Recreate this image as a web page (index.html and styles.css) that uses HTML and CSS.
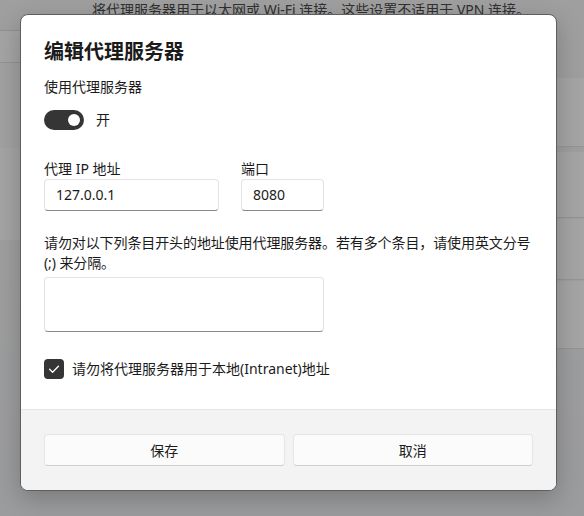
FILE: index.html
```html
<!DOCTYPE html>
<html lang="zh-CN">
<head>
<meta charset="utf-8">
<title>编辑代理服务器</title>
<link rel="stylesheet" href="styles.css">
</head>
<body>
<div class="screen">
  <div class="page">
    <div class="side">
      <div class="side-gap side-gap-top"></div>
      <div class="side-band side-band-a"></div>
      <div class="side-gap side-gap-mid"></div>
      <div class="side-band side-band-b"></div>
    </div>
    <div class="main">
      <p class="page-desc">将代理服务器用于以太网或 Wi-Fi 连接。这些设置不适用于 VPN 连接。</p>
      <div class="cards">
        <div class="bg-card bg-card-1"></div>
        <div class="bg-card bg-card-2"></div>
        <div class="bg-card bg-card-3"></div>
        <div class="bg-card bg-card-4"></div>
      </div>
    </div>
  </div>
  <div class="scrim"></div>

  <div class="dialog" role="dialog" aria-label="编辑代理服务器">
    <div class="dialog-body">
      <h1 class="dialog-title">编辑代理服务器</h1>
      <div class="field-label">使用代理服务器</div>
      <div class="toggle-row">
        <span class="toggle"><span class="toggle-knob"></span></span>
        <span class="toggle-text">开</span>
      </div>

      <div class="address-row">
        <div class="field field-ip">
          <div class="field-label">代理 IP 地址</div>
          <div class="textbox">127.0.0.1</div>
        </div>
        <div class="field field-port">
          <div class="field-label">端口</div>
          <div class="textbox">8080</div>
        </div>
      </div>

      <p class="exceptions-desc">请勿对以下列条目开头的地址使用代理服务器。若有多个条目，请使用英文分号 (;) 来分隔。</p>
      <div class="textbox textarea"></div>

      <div class="check-row">
        <span class="checkbox">
          <svg width="20" height="20" viewBox="0 0 20 20" aria-hidden="true">
            <path d="M5.6 10.3 L8.6 13.2 L14.4 7.2" fill="none" stroke="#ffffff" stroke-width="1.3" stroke-linecap="round" stroke-linejoin="round"/>
          </svg>
        </span>
        <span class="check-text">请勿将代理服务器用于本地(Intranet)地址</span>
      </div>
    </div>
    <div class="dialog-footer">
      <button class="btn" type="button">保存</button>
      <button class="btn" type="button">取消</button>
    </div>
  </div>
</div>
</body>
</html>
```

FILE: styles.css
```css
html, body {
  margin: 0;
  padding: 0;
}

body {
  width: 584px;
  height: 516px;
  overflow: hidden;
  font-family: "Noto Sans", "Noto Sans CJK SC", sans-serif;
  font-size: 14px;
  color: #1b1b1b;
}

.screen {
  position: relative;
  width: 584px;
  height: 516px;
  overflow: hidden;
}

/* underlying settings page */
.page {
  display: grid;
  grid-template-columns: 20px 1fr;
  height: 100%;
  background: linear-gradient(180deg, #f3f3f3 0%, #f1f1f2 55%, #eceef2 100%);
}

.side {
  display: flex;
  flex-direction: column;
}

.side-gap-top { height: 30px; }
.side-band-a {
  height: 31px;
  background: #fafafa;
  border-top: 1px solid #dcdcdc;
  border-bottom: 1px solid #dcdcdc;
}
.side-gap-mid { height: 85px; background: #f6f6f6; }
.side-band-b { height: 92px; background: #fbfbfb; }

.main {
  display: flex;
  flex-direction: column;
}

.page-desc {
  margin: 0;
  padding-left: 72px;
  line-height: 20px;
  color: #4a4a4a;
  white-space: nowrap;
}

.cards {
  margin-top: 58px;
  display: flex;
  flex-direction: column;
  gap: 1px;
}

.bg-card {
  background: #fbfbfb;
  border-bottom: 1px solid #e2e2e2;
}
.bg-card-1 { height: 68px; margin-bottom: 4px; }
.bg-card-2 { height: 65px; }
.bg-card-3 { height: 60px; }
.bg-card-4 { height: 67px; }

.scrim {
  position: absolute;
  inset: 0;
  background: rgba(0, 0, 0, 0.345);
}

/* dialog */
.dialog {
  position: absolute;
  left: 20px;
  top: 14px;
  width: 537px;
  box-sizing: border-box;
  background: #ffffff;
  border: 1px solid #5e5e5e;
  border-radius: 8px;
  overflow: hidden;
  box-shadow: 0 8px 24px rgba(0, 0, 0, 0.22);
}

.dialog-body {
  padding: 23px 23px 30px;
  display: flex;
  flex-direction: column;
}

.dialog-title {
  margin: 0 0 11px;
  font-size: 20px;
  line-height: 28px;
  font-weight: 600;
  color: #1b1b1b;
}

.field-label {
  line-height: 20px;
  color: #1b1b1b;
}

.toggle-row {
  margin-top: 13px;
  display: flex;
  align-items: center;
  gap: 12px;
  height: 20px;
}

.toggle {
  position: relative;
  width: 40px;
  height: 20px;
  border-radius: 10px;
  background: #353535;
  display: flex;
  align-items: center;
  justify-content: flex-end;
  padding-right: 4px;
  box-sizing: border-box;
}

.toggle-knob {
  width: 12px;
  height: 12px;
  border-radius: 50%;
  background: #ffffff;
}

.toggle-text {
  line-height: 20px;
}

.address-row {
  margin-top: 29px;
  display: flex;
  gap: 22px;
  width: 280px;
}

.field {
  display: flex;
  flex-direction: column;
}

.field-ip { width: 175px; }
.field-port { width: 83px; }

.textbox {
  box-sizing: border-box;
  height: 32px;
  padding: 0 11px;
  line-height: 30px;
  background: #ffffff;
  border: 1px solid #e3e3e3;
  border-bottom-color: #8a8a8a;
  border-radius: 4px;
  color: #1b1b1b;
}

.exceptions-desc {
  margin: 22px 0 0;
  line-height: 20px;
  letter-spacing: -0.1px;
}

.textarea {
  margin-top: 4px;
  width: 280px;
  height: 55px;
}

.check-row {
  margin-top: 27px;
  display: flex;
  align-items: center;
  gap: 8px;
  height: 20px;
}

.checkbox {
  width: 20px;
  height: 20px;
  border-radius: 4px;
  background: #353535;
  display: flex;
}

.check-text {
  line-height: 20px;
}

.dialog-footer {
  display: grid;
  grid-template-columns: 1fr 1fr;
  gap: 8px;
  padding: 24px 23px 24px;
  background: #f3f3f3;
  border-top: 1px solid #e5e5e5;
}

.btn {
  height: 32px;
  margin: 0;
  padding: 0;
  font-family: inherit;
  font-size: 14px;
  color: #1b1b1b;
  background: #fbfbfb;
  border: 1px solid #e5e5e5;
  border-bottom-color: #cfcfcf;
  border-radius: 4px;
}
```
